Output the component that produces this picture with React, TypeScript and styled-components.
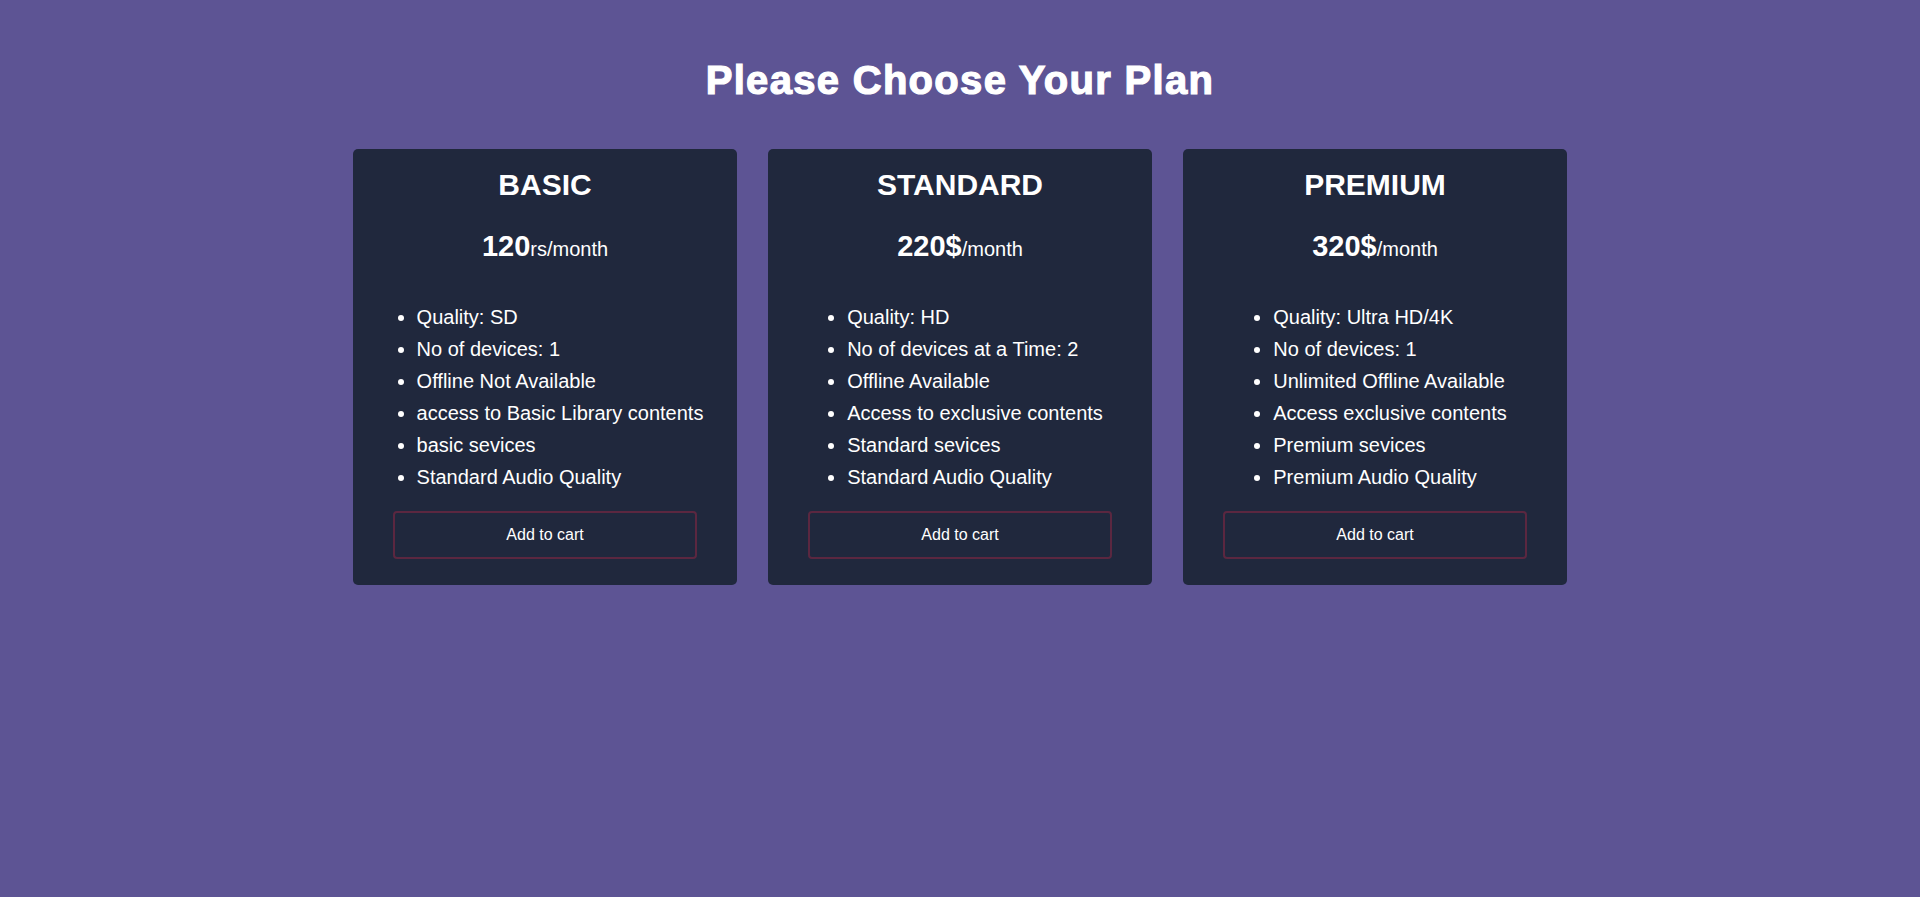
import styled, { createGlobalStyle } from "styled-components";

const GlobalStyle = createGlobalStyle`
  body {
    margin: 0;
    font-family: "Liberation Sans", Arial, sans-serif;
    background-color: #5d5494;
  }
`;

const Page = styled.main`
  min-height: 100vh;
  padding-top: 58px;
  box-sizing: border-box;
  background-color: #5d5494;
  color: #ffffff;
`;

const Title = styled.h1`
  margin: 0;
  text-align: center;
  font-size: 40px;
  font-weight: 900;
  letter-spacing: 1.3px;
  -webkit-text-stroke: 1.2px #ffffff;
`;

const PlanRow = styled.section`
  display: flex;
  justify-content: center;
  gap: 31px;
  margin-top: 46px;
`;

const Card = styled.article`
  width: 384px;
  box-sizing: border-box;
  display: flex;
  flex-direction: column;
  align-items: center;
  padding: 19px 20px 26px;
  background-color: #20283d;
  border-radius: 5px;
`;

const PlanName = styled.h2`
  margin: 0;
  font-size: 30px;
  font-weight: 700;
`;

const Price = styled.div`
  margin-top: 28px;
  font-size: 29px;
  font-weight: 700;

  span {
    font-size: 20px;
    font-weight: 400;
  }
`;

const Features = styled.ul`
  margin: 38px 0 0;
  padding: 0 10px 0 40px;
  font-size: 20px;
  line-height: 32px;
`;

const CartButton = styled.button`
  align-self: stretch;
  margin: 18px 20px 0;
  height: 48px;
  background: transparent;
  border: 2px solid #5b2740;
  border-radius: 4px;
  color: #ffffff;
  font-family: "Liberation Sans", Arial, sans-serif;
  font-size: 16px;
  cursor: pointer;
`;

type Plan = {
  name: string;
  amount: string;
  unit: string;
  features: string[];
};

const plans: Plan[] = [
  {
    name: "BASIC",
    amount: "120",
    unit: "rs/month",
    features: [
      "Quality: SD",
      "No of devices: 1",
      "Offline Not Available",
      "access to Basic Library contents",
      "basic sevices",
      "Standard Audio Quality",
    ],
  },
  {
    name: "STANDARD",
    amount: "220$",
    unit: "/month",
    features: [
      "Quality: HD",
      "No of devices at a Time: 2",
      "Offline Available",
      "Access to exclusive contents",
      "Standard sevices",
      "Standard Audio Quality",
    ],
  },
  {
    name: "PREMIUM",
    amount: "320$",
    unit: "/month",
    features: [
      "Quality: Ultra HD/4K",
      "No of devices: 1",
      "Unlimited Offline Available",
      "Access exclusive contents",
      "Premium sevices",
      "Premium Audio Quality",
    ],
  },
];

export default function App() {
  return (
    <>
      <GlobalStyle />
      <Page>
        <Title>Please Choose Your Plan</Title>
        <PlanRow>
          {plans.map((plan) => (
            <Card key={plan.name}>
              <PlanName>{plan.name}</PlanName>
              <Price>
                {plan.amount}
                <span>{plan.unit}</span>
              </Price>
              <Features>
                {plan.features.map((f) => (
                  <li key={f}>{f}</li>
                ))}
              </Features>
              <CartButton>Add to cart</CartButton>
            </Card>
          ))}
        </PlanRow>
      </Page>
    </>
  );
}
